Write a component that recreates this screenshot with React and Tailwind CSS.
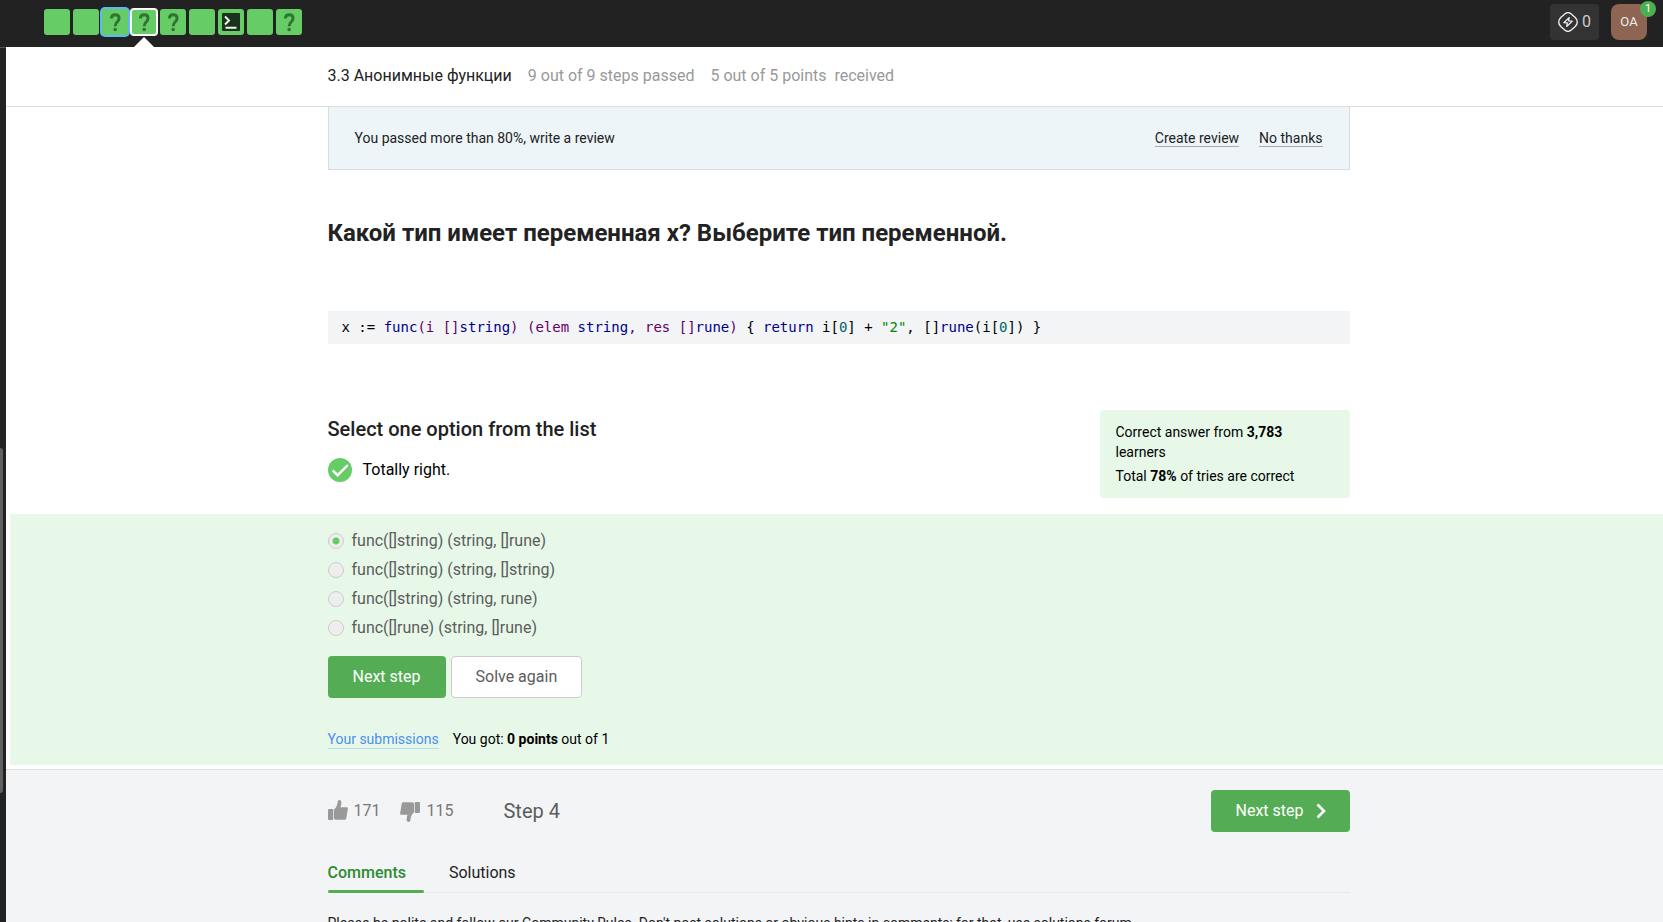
import React, { useState } from "react";

const steps = [
  { kind: "text" },
  { kind: "text" },
  { kind: "quiz", viewed: true },
  { kind: "quiz", current: true },
  { kind: "quiz" },
  { kind: "text" },
  { kind: "code" },
  { kind: "text" },
  { kind: "quiz" },
];

const options = [
  "func([]string) (string, []rune)",
  "func([]string) (string, []string)",
  "func([]string) (string, rune)",
  "func([]rune) (string, []rune)",
];

const codeTokens = [
  ["x := ", "text-black"],
  ["func", "text-[#000088]"],
  ["(i []", "text-[#660066]"],
  ["string", "text-[#000088]"],
  [") (elem ", "text-[#660066]"],
  ["string", "text-[#000088]"],
  [", res []", "text-[#660066]"],
  ["rune", "text-[#000088]"],
  [")", "text-[#660066]"],
  [" { ", "text-black"],
  ["return", "text-[#000088]"],
  [" i[", "text-black"],
  ["0", "text-[#006666]"],
  ["] + ", "text-black"],
  ['"2"', "text-[#008800]"],
  [", []", "text-black"],
  ["rune", "text-[#000088]"],
  ["(i[", "text-black"],
  ["0", "text-[#006666]"],
  ["]) }", "text-black"],
];

function Container({ className = "", children }) {
  return <div className={`mx-auto w-full max-w-[1022px] ${className}`}>{children}</div>;
}

function StepIcon({ kind }) {
  if (kind === "quiz") {
    return (
      <svg viewBox="0 0 26 26" className="size-[26px]" fill="none" aria-hidden="true">
        <path d="M9.400 9.400C9.400 7 10.800 5.700 13.200 5.700s3.900 1.300 3.900 3.500c0 1.800-.9 2.700-2 3.800-1.200 1.200-1.900 2-1.900 4.200" stroke="#2f7432" strokeWidth="2.900" />
        <circle cx="13.200" cy="20.500" r="1.800" fill="#2f7432" />
      </svg>
    );
  }
  if (kind === "code") {
    return (
      <svg viewBox="0 0 26 26" className="size-[26px]" fill="none" aria-hidden="true">
        <rect x="4" y="4" width="18" height="18" rx="1" fill="#1b331c" />
        <path d="M7 7.500l4 4-4 4M7.500 18.700h11" stroke="#f1f8f1" strokeWidth="1.900" />
      </svg>
    );
  }
  return null;
}

function Step({ step, index }) {
  const ring = step.current
    ? "shadow-[inset_0_0_0_1px_#fff,0_0_0_1px_#fff]"
    : step.viewed
      ? "shadow-[0_0_0_2px_#5db8f5]"
      : "";
  return (
    <a
      href={`#step-${index + 1}`}
      aria-label={`Step ${index + 1}`}
      className={`relative flex size-[26px] items-center justify-center rounded-[3px] bg-[#66cc66] ${ring}`}
    >
      <StepIcon kind={step.kind} />
      {step.current && (
        <svg viewBox="0 0 20 10" className="absolute top-[28px] left-[3px] h-[10px] w-[20px]" aria-hidden="true">
          <path d="M0 10L10 0l10 10z" fill="#fff" />
        </svg>
      )}
    </a>
  );
}

function ThumbUp({ className = "" }) {
  return (
    <svg viewBox="0 0 20 20" className={`size-5 ${className}`} fill="#999" aria-hidden="true">
      <rect x="0" y="9" width="5.300" height="11" rx="1" />
      <path d="M6 9.500c2-1.500 3.400-4 3.600-7.600C9.700.7 10.400 0 11.400 0c1.300 0 2 1 2 2.500 0 1.800-.4 3.300-1 4.700h6.200c.9 0 1.500.7 1.300 1.600l-1.700 9.600c-.2 1-.8 1.400-1.700 1.400H8.200C7 19.800 6 19.200 6 18z" />
    </svg>
  );
}

export default function App() {
  const [answer, setAnswer] = useState(0);

  return (
    <div className="flex h-screen flex-col overflow-hidden bg-white font-['Roboto','Liberation_Sans',sans-serif] text-base text-[#222]">
      <header className="flex h-[47px] shrink-0 items-center justify-between bg-[#222] pr-4 pl-11">
        <nav aria-label="Lesson steps" className="flex gap-[3px] pb-[3px]">
          {steps.map((step, i) => (
            <Step key={i} step={step} index={i} />
          ))}
        </nav>
        <div className="flex gap-3 pb-[3px]">
          <button className="flex h-9 w-[49px] items-center justify-center gap-1 rounded bg-[#333] text-[#ccc]" aria-label="Knowledge 0">
            <svg viewBox="0 0 20 20" className="size-5" fill="none" stroke="#eee" strokeWidth="1.400" strokeLinejoin="round" aria-hidden="true">
              <path d="M7.700 1.300Q10 0 12.300 1.300L17 5.200Q19.300 7.400 19.300 10T17 14.800l-4.700 3.900Q10 20 7.700 18.700L3 14.800Q.7 12.600.7 10T3 5.200z" />
              <path d="M11.300 5.500L5.800 10.700l3.600.2-.8 3.600 5.600-5.300-3.600-.2z" strokeWidth="1.200" />
            </svg>
            <span>0</span>
          </button>
          <button className="relative size-9 rounded-lg bg-[#8d6552] text-[13px] text-[#eee]" aria-label="Profile">
            OA
            <span className="absolute -top-[3px] -right-[9px] flex size-4 items-center justify-center rounded-full bg-[#4caf50] text-[11px] leading-4 text-white">
              1
            </span>
          </button>
        </div>
      </header>

      <div className="flex min-h-0 grow">
        <aside className="flex w-[6px] shrink-0 flex-col border-t border-[#555] bg-[#222]" aria-label="Course contents">
          <div className="grow-[400]" />
          <div className="w-[3px] grow-[345] rounded-r bg-[#606060]" />
          <div className="grow-[129]" />
        </aside>

        <main className="min-w-0 grow">
          <div className="border-b border-[#ddd] pl-2">
            <Container className="flex h-[59px] items-center gap-4 pb-px text-[#999]">
              <h1 className="text-[#222]">3.3 Анонимные функции</h1>
              <span>9 out of 9 steps passed</span>
              <span className="whitespace-pre">5 out of 5 points  received</span>
            </Container>
          </div>

          <div className="pl-2">
            <Container>
              <section className="flex h-[63px] items-center justify-between border border-t-0 border-[#d8dcde] bg-[#edf5f9] px-[26px] text-sm leading-4">
                <p>You passed more than 80%, write a review</p>
                <div className="flex gap-5">
                  <a href="#review" className="border-b border-[#aaa]">Create review</a>
                  <a href="#dismiss" className="border-b border-[#aaa]">No thanks</a>
                </div>
              </section>

              <h2 className="mt-[47px] text-2xl leading-8 font-bold">Какой тип имеет переменная x? Выберите тип переменной.</h2>

              <pre className="mt-[62px] bg-[#f3f4f6] px-[14px] py-[6px] font-['DejaVu_Sans_Mono','Liberation_Mono',monospace] text-sm leading-[21px]">
                <code className="font-['DejaVu_Sans_Mono','Liberation_Mono',monospace]">
                  {codeTokens.map(([text, color], i) => (
                    <span key={i} className={color}>{text}</span>
                  ))}
                </code>
              </pre>

              <div className="mt-[66px] flex items-start justify-between pb-4">
                <div>
                  <h3 id="quiz-title" className="mt-1 text-xl leading-[30px] font-medium">Select one option from the list</h3>
                  <p className="mt-[14px] flex items-center gap-[11px] leading-6 text-black">
                    <svg viewBox="0 0 24 24" className="size-6" fill="none" aria-hidden="true">
                      <circle cx="12" cy="12" r="12" fill="#66cc66" />
                      <path d="M4.600 12.300l5 4.900L19.800 7" stroke="#fff" strokeWidth="2.400" />
                    </svg>
                    Totally right.
                  </p>
                </div>
                <div className="flex h-[88px] w-[250px] flex-col justify-center gap-1 rounded bg-[#e7f8e9] px-4 text-sm leading-5 text-black">
                  <p>Correct answer from <b>3,783</b> learners</p>
                  <p>Total <b>78%</b> of tries are correct</p>
                </div>
              </div>
            </Container>
          </div>

          <section className="mb-1 ml-1 bg-[#e7f8e9] pt-3 pb-4 pl-1">
            <Container>
              <div role="radiogroup" aria-labelledby="quiz-title">
                {options.map((option, i) => (
                  <label key={option} className="flex h-[29px] items-center gap-2 text-[#5c5c5c]">
                    <input
                      type="radio"
                      name="answer"
                      checked={answer === i}
                      onChange={() => setAnswer(i)}
                      className="size-4 appearance-none rounded-full border border-[#ccc] bg-[#eee] checked:bg-[radial-gradient(circle,#66cc66_3px,#eee_4px)]"
                    />
                    {option}
                  </label>
                ))}
              </div>
              <div className="mt-[14px] flex gap-[5px]">
                <button className="h-[42px] rounded bg-[#54ad54] px-[25px] text-white">Next step</button>
                <button className="h-[42px] rounded border border-[#ccc] bg-white px-6 text-[#5c5c5c]">Solve again</button>
              </div>
              <div className="mt-8 flex gap-[14px] text-sm leading-[18px] text-black">
                <a href="#submissions" className="border-b border-[#b5dcea] text-[#4a8ff0]">Your submissions</a>
                <p>You got: <b>0 points</b> out of 1</p>
              </div>
            </Container>
          </section>

          <footer className="border-t border-[#ddd] bg-[#f3f4f6] pb-40 pl-2">
            <Container>
              <div className="mt-5 flex h-[42px] items-center text-[#777]">
                <button className="flex items-center gap-[6px]" aria-label="Like, 171">
                  <ThumbUp className="mb-[2px]" />
                  171
                </button>
                <button className="ml-5 flex items-center gap-[6px]" aria-label="Dislike, 115">
                  <ThumbUp className="mt-[2px] rotate-180" />
                  115
                </button>
                <p className="ml-[50px] text-xl text-[#5c5c5c]">Step 4</p>
                <button className="ml-auto flex h-[42px] items-center gap-3 rounded bg-[#54ad54] pr-6 pl-[25px] text-white">
                  Next step
                  <svg viewBox="0 0 10 16" className="h-4 w-[10px]" fill="none" aria-hidden="true">
                    <path d="M1.500 1.500L8 8l-6.500 6.500" stroke="#fff" strokeWidth="2.600" />
                  </svg>
                </button>
              </div>
              <div role="tablist" className="mt-7 flex h-[33px] gap-[25px] border-b border-[#e5e7e9]">
                <button role="tab" aria-selected="true" className="relative pr-[18px] pb-[7px] text-left font-medium text-[#2e8b33]">
                  Comments
                  <span className="absolute inset-x-0 -bottom-px h-[3px] rounded bg-[#54ad54]" />
                </button>
                <button role="tab" aria-selected="false" className="pb-[7px]">Solutions</button>
              </div>
              <p className="mt-5 text-sm leading-5">
                Please be polite and follow our Community Rules. Don't post solutions or obvious hints in comments; for that, use solutions forum.
              </p>
            </Container>
          </footer>
        </main>
      </div>
    </div>
  );
}
